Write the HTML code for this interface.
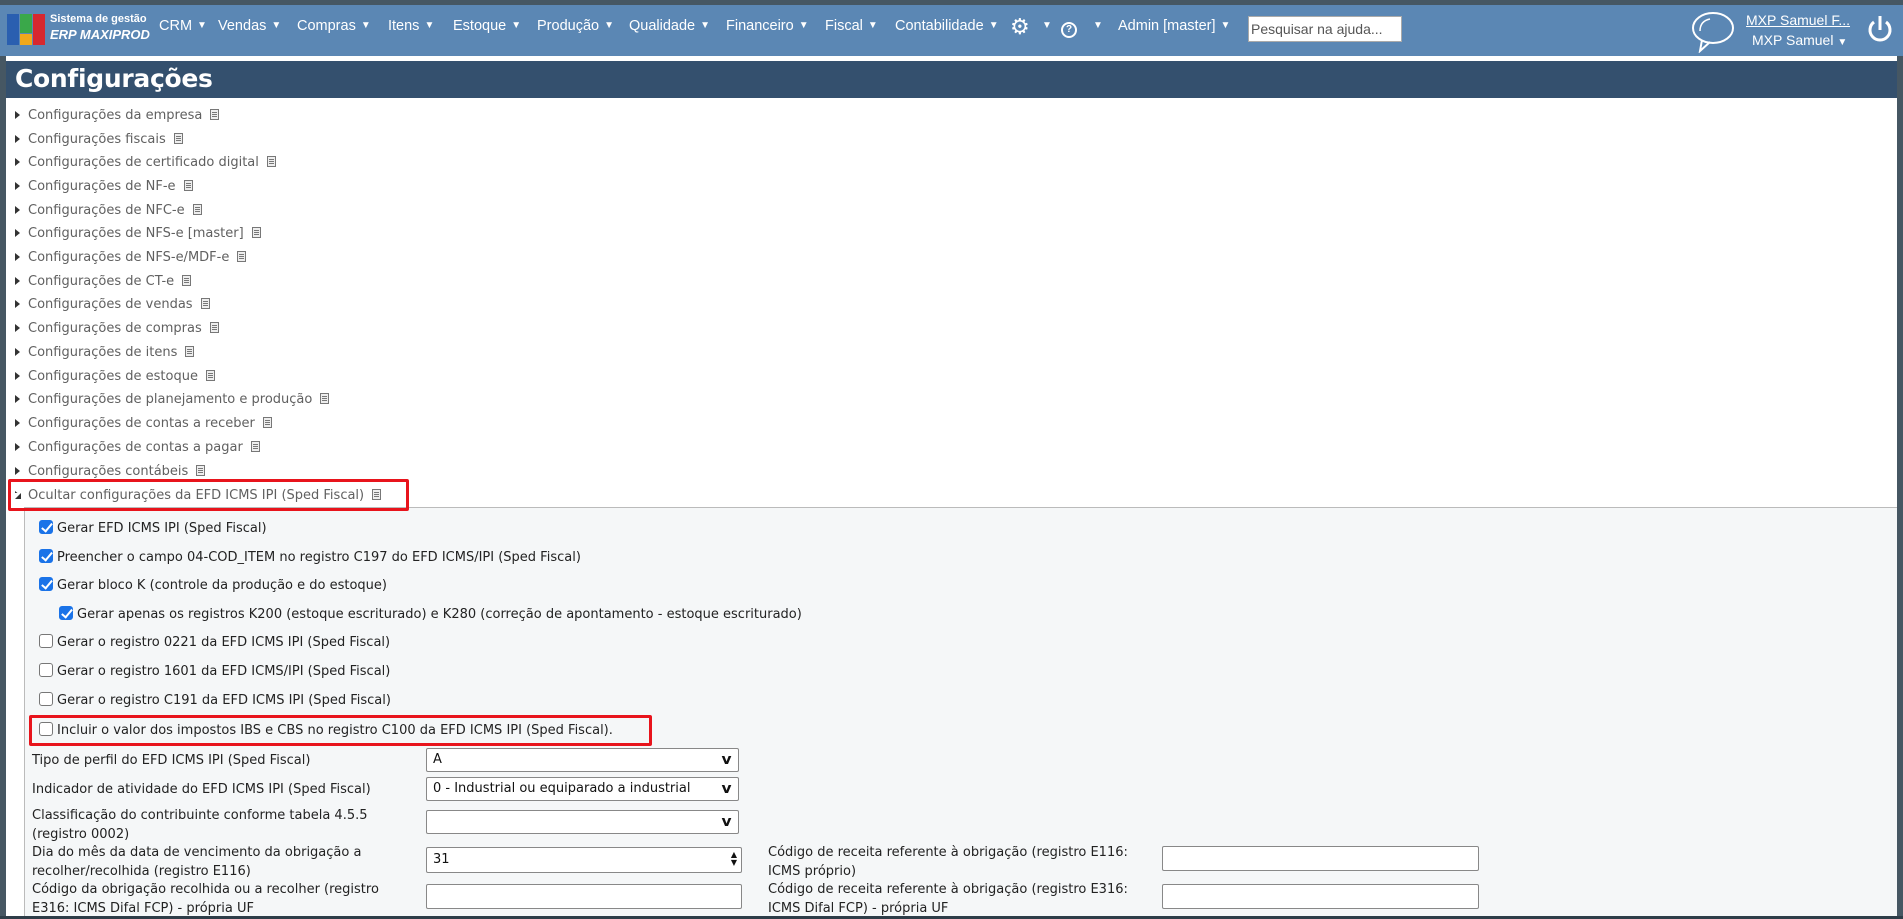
<!DOCTYPE html>
<html><head><meta charset="utf-8"><style>
*{margin:0;padding:0;box-sizing:border-box}
body{width:1903px;height:919px;overflow:hidden;background:#465763;font-family:"DejaVu Sans","Liberation Sans",sans-serif;position:relative}
.a{position:absolute;white-space:nowrap}
#hdr{position:absolute;left:0;top:5px;width:1903px;height:51px;background:#5b87b4}
.m{position:absolute;top:18px;color:#fff;font:14.5px "Liberation Sans",sans-serif}
.m i{font-style:normal;font-size:10px;margin-left:5px;vertical-align:2px}
#main{position:absolute;left:6px;top:56px;width:1891px;height:861px;background:#fff}
#title{position:absolute;left:6px;top:61px;width:1891px;height:37px;background:#34506e;color:#fff;font:bold 25px "DejaVu Sans",sans-serif;padding:3px 0 0 9px;letter-spacing:-0.3px}
.r{position:absolute;left:15px;font-size:13px;color:#606060;height:20px;line-height:20px}
.r:before{content:"";display:inline-block;width:0;height:0;border-left:5px solid #333;border-top:4.5px solid transparent;border-bottom:4.5px solid transparent;margin-right:8px;vertical-align:0}
.d{display:inline-block;width:9px;height:11px;border:1px solid #777;margin-left:8px;vertical-align:-1px;background:linear-gradient(#777,#777) 1px 2px/5px 1px no-repeat,linear-gradient(#777,#777) 1px 4px/5px 1px no-repeat,linear-gradient(#777,#777) 1px 6px/5px 1px no-repeat;background-color:#eee}
#panel{position:absolute;left:24px;top:507px;width:1873px;height:412px;background:#f5f7f8;border-left:1px solid #bbb;border-top:1px solid #bbb}
.c{position:absolute;font-size:13px;color:#222;height:18px;line-height:18px}
.cb{display:inline-block;width:14px;height:14px;border:1px solid #777;border-radius:3px;background:#fff;vertical-align:-2px;margin-right:4px}
.cb.k{background:#1a73e8;border-color:#1a73e8;position:relative}
.cb.k:after{content:"";position:absolute;left:4px;top:0px;width:4px;height:9px;border:solid #fff;border-width:0 2px 2px 0;transform:rotate(40deg)}
.l{position:absolute;font-size:13px;color:#222;line-height:19px}
.s{position:absolute;background:#fff;border:1px solid #888;border-radius:2px;font-size:13px;color:#111;padding:3px 6px}
.s.sel:after{content:"v";position:absolute;right:7px;top:3px;font-size:14px;font-weight:bold;transform:scaleX(1.1)}
.box{position:absolute;border:3px solid #e8141c;border-radius:2px}
</style></head><body>
<div id="hdr"></div>
<div class="a" style="left:7px;top:14px;width:40px;height:31px">
<div class="a" style="left:0;top:0;width:12px;height:31px;background:#2a5fb0"></div>
<div class="a" style="left:13px;top:0;width:12px;height:19px;background:#3aa84a"></div>
<div class="a" style="left:13px;top:20px;width:12px;height:11px;background:#f0a81c"></div>
<div class="a" style="left:26px;top:0;width:12px;height:31px;background:#d7282f"></div>
</div>
<div class="a" style="left:50px;top:13px;color:#fff;font:bold 11px 'Liberation Sans',sans-serif">Sistema de gestão</div>
<div class="a" style="left:50px;top:27px;color:#fff;font:italic bold 13px 'Liberation Sans',sans-serif">ERP MAXIPROD</div>
<div class="m" style="left:159px">CRM<i>▼</i></div>
<div class="m" style="left:218px">Vendas<i>▼</i></div>
<div class="m" style="left:297px">Compras<i>▼</i></div>
<div class="m" style="left:388px">Itens<i>▼</i></div>
<div class="m" style="left:453px">Estoque<i>▼</i></div>
<div class="m" style="left:537px">Produção<i>▼</i></div>
<div class="m" style="left:629px">Qualidade<i>▼</i></div>
<div class="m" style="left:726px">Financeiro<i>▼</i></div>
<div class="m" style="left:825px">Fiscal<i>▼</i></div>
<div class="m" style="left:895px">Contabilidade<i>▼</i></div>
<div class="m" style="left:1010px;top:14px;font-size:22px">⚙</div><div class="m" style="left:1037px"><i>▼</i></div>
<div class="a" style="left:1061px;top:22px;width:16px;height:16px;border:2px solid #fff;border-radius:50%;color:#fff;font:bold 10px sans-serif;text-align:center;line-height:12px">?</div>
<div class="m" style="left:1088px"><i>▼</i></div>
<div class="m" style="left:1118px">Admin [master]<i>▼</i></div>
<div class="a" style="left:1248px;top:16px;width:154px;height:26px;background:#fff;border:1px solid #aaa;font:14px 'Liberation Sans',sans-serif;color:#555;padding:4px 2px">Pesquisar na ajuda...</div>
<svg class="a" style="left:1690px;top:11px" width="46" height="42"><ellipse cx="23" cy="17" rx="20" ry="15" fill="none" stroke="#fff" stroke-width="2"/><path d="M12 29 L10 40 L20 31" fill="none" stroke="#fff" stroke-width="2"/><path d="M10 20 Q10 10 20 8" fill="none" stroke="#fff" stroke-width="1.5"/></svg>
<div class="a" style="left:1746px;top:12px;color:#fff;font:14px 'Liberation Sans',sans-serif;text-decoration:underline">MXP Samuel F...</div>
<div class="a" style="left:1752px;top:32px;color:#fff;font:14px 'Liberation Sans',sans-serif">MXP Samuel <span style="font-size:10px">▼</span></div>
<svg class="a" style="left:1866px;top:13px" width="28" height="32"><path d="M8 9 A10 10 0 1 0 20 9" fill="none" stroke="#fff" stroke-width="3"/><line x1="14" y1="3" x2="14" y2="17" stroke="#fff" stroke-width="3"/></svg>
<div id="main"></div>
<div id="title">Configurações</div>
<div class="r" style="top:106px">Configurações da empresa<span class="d"></span></div>
<div class="r" style="top:130px">Configurações fiscais<span class="d"></span></div>
<div class="r" style="top:153px">Configurações de certificado digital<span class="d"></span></div>
<div class="r" style="top:177px">Configurações de NF-e<span class="d"></span></div>
<div class="r" style="top:201px">Configurações de NFC-e<span class="d"></span></div>
<div class="r" style="top:224px">Configurações de NFS-e [master]<span class="d"></span></div>
<div class="r" style="top:248px">Configurações de NFS-e/MDF-e<span class="d"></span></div>
<div class="r" style="top:272px">Configurações de CT-e<span class="d"></span></div>
<div class="r" style="top:295px">Configurações de vendas<span class="d"></span></div>
<div class="r" style="top:319px">Configurações de compras<span class="d"></span></div>
<div class="r" style="top:343px">Configurações de itens<span class="d"></span></div>
<div class="r" style="top:367px">Configurações de estoque<span class="d"></span></div>
<div class="r" style="top:390px">Configurações de planejamento e produção<span class="d"></span></div>
<div class="r" style="top:414px">Configurações de contas a receber<span class="d"></span></div>
<div class="r" style="top:438px">Configurações de contas a pagar<span class="d"></span></div>
<div class="r" style="top:462px">Configurações contábeis<span class="d"></span></div>
<div id="panel"></div>
<div class="r" style="top:486px;left:15px">Ocultar configurações da EFD ICMS IPI (Sped Fiscal)<span class="d"></span></div>
<div class="a" style="left:15px;top:493px;width:0;height:0;border-right:6px solid #333;border-top:6px solid transparent;background:#fff"></div>
<div class="box" style="left:8px;top:479px;width:401px;height:32px"></div>
<div class="c" style="left:39px;top:520px"><span class="cb k"></span>Gerar EFD ICMS IPI (Sped Fiscal)</div>
<div class="c" style="left:39px;top:549px"><span class="cb k"></span>Preencher o campo 04-COD_ITEM no registro C197 do EFD ICMS/IPI (Sped Fiscal)</div>
<div class="c" style="left:39px;top:577px"><span class="cb k"></span>Gerar bloco K (controle da produção e do estoque)</div>
<div class="c" style="left:59px;top:606px"><span class="cb k"></span>Gerar apenas os registros K200 (estoque escriturado) e K280 (correção de apontamento - estoque escriturado)</div>
<div class="c" style="left:39px;top:634px"><span class="cb"></span>Gerar o registro 0221 da EFD ICMS IPI (Sped Fiscal)</div>
<div class="c" style="left:39px;top:663px"><span class="cb"></span>Gerar o registro 1601 da EFD ICMS/IPI (Sped Fiscal)</div>
<div class="c" style="left:39px;top:692px"><span class="cb"></span>Gerar o registro C191 da EFD ICMS IPI (Sped Fiscal)</div>
<div class="c" style="left:39px;top:722px"><span class="cb"></span>Incluir o valor dos impostos IBS e CBS no registro C100 da EFD ICMS IPI (Sped Fiscal).</div>
<div class="box" style="left:29px;top:715px;width:623px;height:31px"></div>
<div class="l" style="left:32px;top:751px">Tipo de perfil do EFD ICMS IPI (Sped Fiscal)</div>
<div class="s sel" style="left:426px;top:748px;width:313px;height:24px">A</div>
<div class="l" style="left:32px;top:780px">Indicador de atividade do EFD ICMS IPI (Sped Fiscal)</div>
<div class="s sel" style="left:426px;top:777px;width:313px;height:24px">0 - Industrial ou equiparado a industrial</div>
<div class="l" style="left:32px;top:806px">Classificação do contribuinte conforme tabela 4.5.5<br>(registro 0002)</div>
<div class="s sel" style="left:426px;top:810px;width:313px;height:24px"></div>
<div class="l" style="left:32px;top:843px">Dia do mês da data de vencimento da obrigação a<br>recolher/recolhida (registro E116)</div>
<div class="s" style="left:426px;top:847px;width:316px;height:26px;padding-top:4px">31<span style="position:absolute;right:4px;top:3px;font-size:8px;line-height:8px">▲<br>▼</span></div>
<div class="l" style="left:768px;top:843px">Código de receita referente à obrigação (registro E116:<br>ICMS próprio)</div>
<div class="s" style="left:1162px;top:846px;width:317px;height:25px"></div>
<div class="l" style="left:32px;top:880px">Código da obrigação recolhida ou a recolher (registro<br>E316: ICMS Difal FCP) - própria UF</div>
<div class="s" style="left:426px;top:884px;width:316px;height:25px"></div>
<div class="l" style="left:768px;top:880px">Código de receita referente à obrigação (registro E316:<br>ICMS Difal FCP) - própria UF</div>
<div class="s" style="left:1162px;top:884px;width:317px;height:25px"></div>
<div class="a" style="left:0;top:916px;width:1903px;height:3px;background:#2e3d48"></div>
</body></html>
